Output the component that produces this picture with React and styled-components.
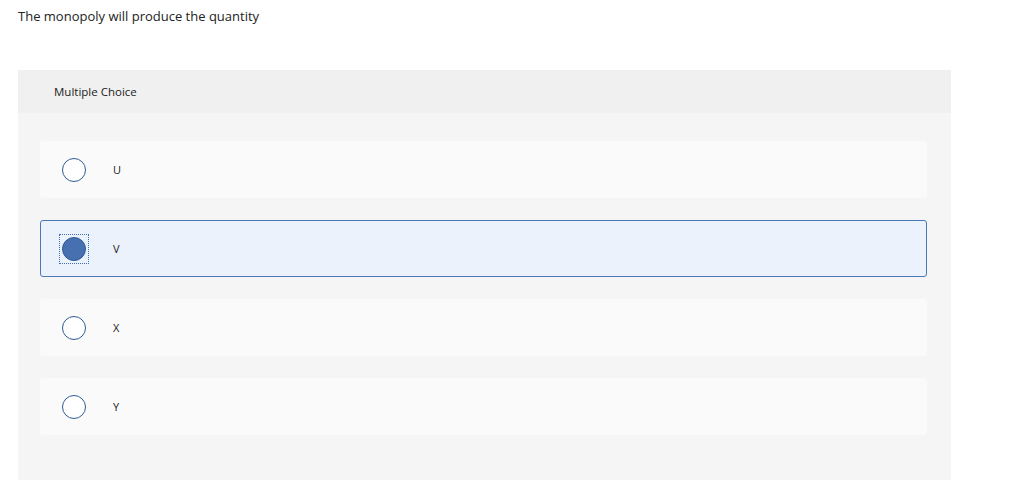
import React, { useState } from 'react';
import styled, { createGlobalStyle } from 'styled-components';

const GlobalStyle = createGlobalStyle`
  body {
    margin: 0;
    background: #fff;
    font-family: "Open Sans", Lato, Arial, sans-serif;
    color: #222;
  }
`;

const Page = styled.div`
  padding: 8px 18px 0 18px;
  width: 933px;
`;

const Question = styled.div`
  font-size: 13px;
  line-height: 16px;
  color: #222;
  margin-bottom: 46px;
`;

const Panel = styled.div`
  background: #f5f5f5;
  padding-bottom: 45px;
`;

const PanelHeader = styled.div`
  height: 43px;
  background: #f0f0f0;
  display: flex;
  align-items: center;
  padding-left: 36px;
  font-size: 11.5px;
  color: #222;
  margin-bottom: 28px;
`;

const OptionList = styled.div`
  display: flex;
  flex-direction: column;
  gap: 22px;
  padding: 0 24px 0 22px;
`;

const Option = styled.label`
  height: 57px;
  box-sizing: border-box;
  display: flex;
  align-items: center;
  border-radius: 3px;
  cursor: pointer;
  background: ${p => (p.selected ? '#ebf2fb' : '#fafafa')};
  border: 1px solid ${p => (p.selected ? '#4a78b8' : '#fafafa')};
  padding-left: 18px;
`;

const RadioWrap = styled.span`
  width: 30px;
  height: 30px;
  box-sizing: border-box;
  display: flex;
  align-items: center;
  justify-content: center;
  border: 1px dotted ${p => (p.focused ? '#3f6fb3' : 'transparent')};
`;

const Radio = styled.span`
  width: 24px;
  height: 24px;
  box-sizing: border-box;
  border-radius: 50%;
  border: 1px solid #2f5b94;
  background: ${p => (p.checked ? '#4670b0' : '#fff')};
  flex: none;
`;

const Label = styled.span`
  margin-left: 24px;
  font-size: 11px;
  color: #222;
`;

const choices = ['U', 'V', 'X', 'Y'];

export default function App() {
  const [selected, setSelected] = useState('V');
  return (
    <>
      <GlobalStyle />
      <Page>
        <Question>The monopoly will produce the quantity</Question>
        <Panel>
          <PanelHeader>Multiple Choice</PanelHeader>
          <OptionList>
            {choices.map(c => (
              <Option key={c} selected={selected === c} onClick={() => setSelected(c)}>
                <RadioWrap focused={selected === c}>
                  <Radio checked={selected === c} />
                </RadioWrap>
                <Label>{c}</Label>
              </Option>
            ))}
          </OptionList>
        </Panel>
      </Page>
    </>
  );
}
